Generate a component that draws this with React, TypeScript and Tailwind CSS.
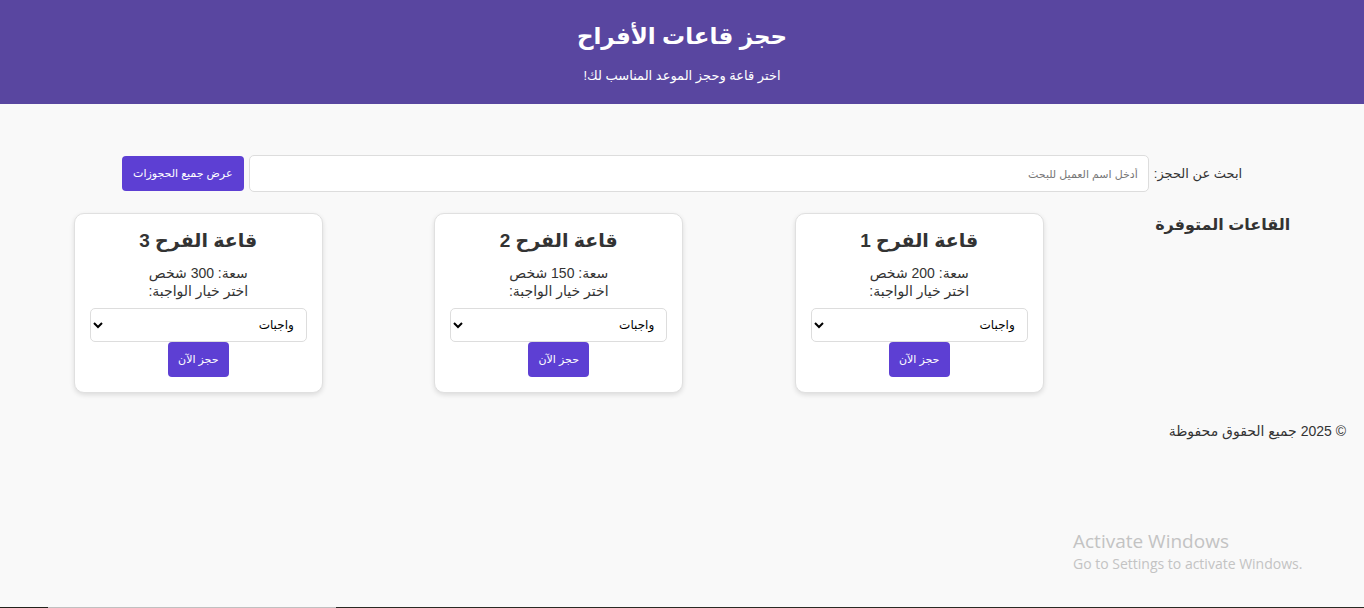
import React from 'react';

const halls = [
  { id: 1, name: 'قاعة الفرح 1', capacity: 200 },
  { id: 2, name: 'قاعة الفرح 2', capacity: 150 },
  { id: 3, name: 'قاعة الفرح 3', capacity: 300 },
];

function HallCard({ name, capacity }: { name: string; capacity: number }) {
  return (
    <div className="w-[249px] h-[180px] bg-white border border-[#e0e0e0] rounded-[10px] shadow-[0_2px_5px_rgba(0,0,0,0.12)] flex flex-col items-center pt-[14px] px-[15px]">
      <h3 className="text-[19px] font-bold text-[#333] leading-[26px]">{name}</h3>
      <p className="mt-[10px] text-[14px] leading-[18px] text-[#333]">سعة: {capacity} شخص</p>
      <p className="text-[14px] leading-[18px] text-[#333]">اختر خيار الواجبة:</p>
      <select
        defaultValue="meals"
        className="mt-[8px] w-[217px] h-[34px] bg-white border border-[#ddd] rounded-[5px] px-[8px] text-[12px] text-black"
      >
        <option value="meals">واجبات</option>
      </select>
      <button className="w-[61px] h-[35px] bg-[#5d3fd3] text-white text-[11px] rounded-[4px]">
        حجز الآن
      </button>
    </div>
  );
}

export default function App() {
  return (
    <div
      dir="rtl"
      className="relative min-h-[608px] h-[608px] overflow-hidden bg-[#f9f9f9] text-[#333] font-['Liberation_Sans','DejaVu_Sans',sans-serif]"
    >
      {/* Header */}
      <header className="h-[104px] bg-[#5946a0] text-white flex flex-col items-center pt-[20px]">
        <h1 className="text-[23px] font-bold leading-[32px]">حجز قاعات الأفراح</h1>
        <p className="mt-[15px] text-[13px] leading-[18px]">اختر قاعة وحجز الموعد المناسب لك!</p>
      </header>

      {/* Search */}
      <div className="mt-[51px] flex items-center justify-center gap-[5px]">
        <label className="text-[13px] text-[#333]">ابحث عن الحجز:</label>
        <input
          placeholder="أدخل اسم العميل للبحث"
          className="w-[900px] h-[37px] bg-white border border-[#ddd] rounded-[5px] px-[10px] text-[11px] placeholder:text-[#777] outline-none"
        />
        <button className="w-[122px] h-[35px] bg-[#5d3fd3] text-white text-[11px] rounded-[4px]">
          عرض جميع الحجوزات
        </button>
      </div>

      {/* Halls */}
      <section className="mt-[21px] px-[18px] flex justify-around items-start">
        <h2 className="text-[16px] font-bold text-[#333] leading-[24px]">القاعات المتوفرة</h2>
        {halls.map((h) => (
          <HallCard key={h.id} name={h.name} capacity={h.capacity} />
        ))}
      </section>

      {/* Footer */}
      <footer className="mt-[29px] px-[18px] text-[14px] leading-[18px] text-[#333]">
        © 2025 جميع الحقوق محفوظة
      </footer>

      {/* OS watermark */}
      <div dir="ltr" className="absolute left-[1073px] top-[529px] text-[#c3c3c3] font-['Open_Sans','DejaVu_Sans',sans-serif] pointer-events-none">
        <div className="text-[19px] leading-[24px]">Activate Windows</div>
        <div className="text-[14px] leading-[22px]">Go to Settings to activate Windows.</div>
      </div>

      {/* taskbar edge */}
      <div dir="ltr" className="absolute left-0 bottom-0 w-full h-[1px] flex">
        <div className="w-[48px] bg-[#22221c]" />
        <div className="w-[288px] bg-[#c0c0c0]" />
        <div className="flex-1 bg-[#2a2a24]" />
      </div>
    </div>
  );
}
